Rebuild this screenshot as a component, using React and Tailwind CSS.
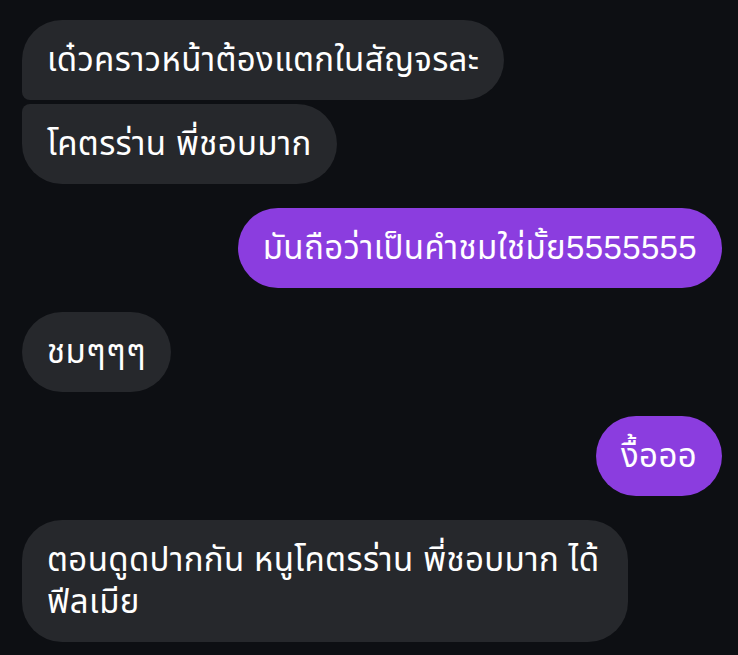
import React from "react";

const messages = [
  { id: 1, from: "them", text: "เด๋วคราวหน้าต้องแตกในสัญจรละ", shape: "rounded-[40px] rounded-bl-[8px]" },
  { id: 2, from: "them", text: "โคตรร่าน พี่ชอบมาก", shape: "rounded-[40px] rounded-tl-[8px]", tight: true },
  { id: 3, from: "me", text: "มันถือว่าเป็นคำชมใช่มั้ย5555555", shape: "rounded-[40px]" },
  { id: 4, from: "them", text: "ชมๆๆๆ", shape: "rounded-[40px]" },
  { id: 5, from: "me", text: "งื้อออ", shape: "rounded-[40px]" },
  { id: 6, from: "them", text: "ตอนดูดปากกัน หนูโคตรร่าน พี่ชอบมาก ได้ฟีลเมีย", shape: "rounded-[40px]", wide: true },
];

function Bubble({ msg }) {
  const mine = msg.from === "me";
  return (
    <div className={`flex ${mine ? "justify-end" : "justify-start"} ${msg.tight ? "mt-[4px]" : "mt-[24px]"} first:mt-0`}>
      <div
        className={`${msg.shape} ${mine ? "bg-[#8b3ddf]" : "bg-[#26282c]"} ${msg.wide ? "max-w-[606px]" : ""} px-[25px] py-[19px] text-[33px] leading-[42px] tracking-[0.35px] text-white`}
      >
        {msg.text}
      </div>
    </div>
  );
}

export default function App() {
  return (
    <div
      className="w-[738px] h-[655px] overflow-hidden bg-[#0d0f13] px-[16px] pt-[20px]"
      style={{ fontFamily: '"Liberation Sans", "Noto Sans Thai", "Noto Sans", sans-serif' }}
    >
      <div className="flex flex-col pl-[6px]">
        {messages.map((m) => (
          <Bubble key={m.id} msg={m} />
        ))}
      </div>
    </div>
  );
}
